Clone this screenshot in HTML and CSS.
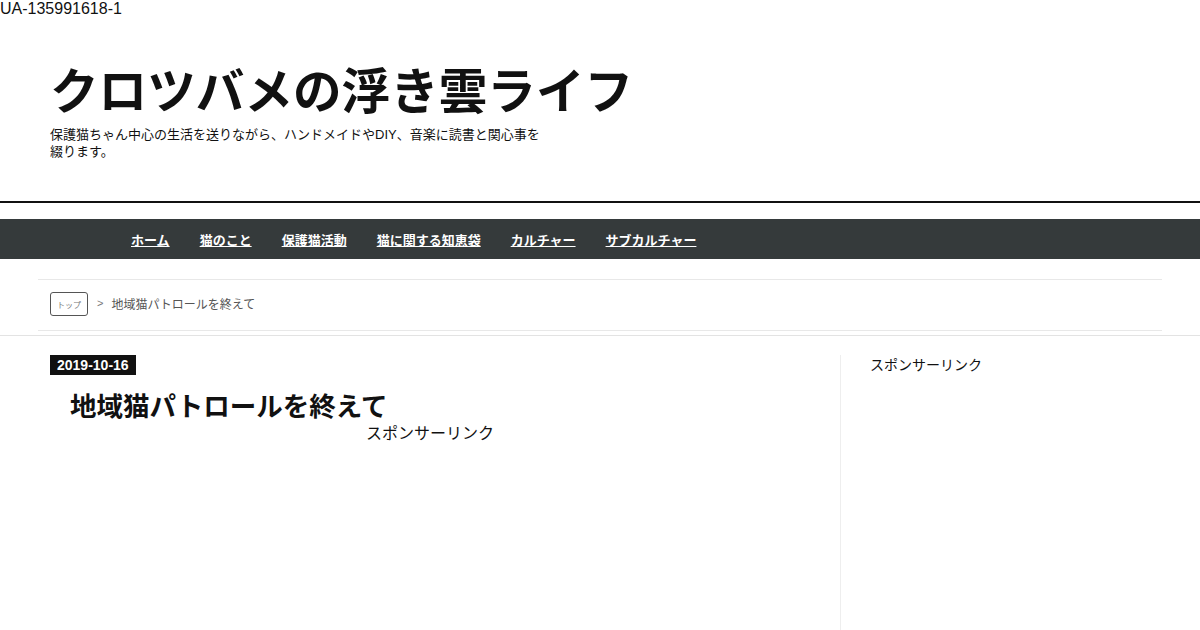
FILE: index.html
```html
<!DOCTYPE html>
<html lang="ja">
<head>
    <meta charset="UTF-8">
    <meta name="viewport" content="width=device-width, initial-scale=1.0">
    <title>地域猫パトロールを終えて - クロツバメの浮き雲ライフ</title>
    <link rel="stylesheet" href="styles.css">
</head>
<body>
    <div class="ua">UA-135991618-1</div>
    <header class="site-header">
        <h1 class="site-title">クロツバメの浮き雲ライフ</h1>
        <p class="site-desc">保護猫ちゃん中心の生活を送りながら、ハンドメイドやDIY、音楽に読書と関心事を綴ります。</p>
    </header>
    <nav class="global-nav">
        <a href="#">ホーム</a>
        <a href="#">猫のこと</a>
        <a href="#">保護猫活動</a>
        <a href="#">猫に関する知恵袋</a>
        <a href="#">カルチャー</a>
        <a href="#">サブカルチャー</a>
    </nav>
    <div class="breadcrumb-wrap">
        <div class="breadcrumb">
            <a href="#" class="crumb-top">トップ</a>
            <span class="crumb-sep">&gt;</span>
            <span class="crumb-current">地域猫パトロールを終えて</span>
        </div>
    </div>
    <div class="container">
        <main class="main">
            <span class="post-date">2019-10-16</span>
            <h2 class="post-title">地域猫パトロールを終えて</h2>
            <p class="sponsor">スポンサーリンク</p>
        </main>
        <aside class="sidebar">
            <p class="sidebar-sponsor">スポンサーリンク</p>
        </aside>
    </div>
</body>
</html>
```

FILE: styles.css
```css
body {
    font-family: "Liberation Sans", "Noto Sans CJK JP", sans-serif;
    margin: 0;
    padding: 0;
    color: #111;
    background-color: #fff;
}
.ua {
    font-size: 16px;
    line-height: 18px;
}
.site-header {
    padding: 44px 50px 41px;
    border-bottom: 2px solid #111;
}
.site-title {
    font-size: 48.6px;
    line-height: 60px;
    margin: 0;
    font-weight: bold;
}
.site-desc {
    width: 500px;
    font-size: 13px;
    line-height: 17px;
    margin: 4px 0 0;
}
.global-nav {
    display: flex;
    gap: 30px;
    margin-top: 16px;
    padding-left: 131px;
    height: 40px;
    align-items: center;
    background-color: #353a3b;
}
.global-nav a {
    color: #fff;
    font-size: 13px;
    font-weight: bold;
    text-decoration: underline;
}
.breadcrumb-wrap {
    margin-top: 20px;
    padding-bottom: 4px;
    border-bottom: 1px solid #e3e3e3;
}
.breadcrumb {
    margin: 0 38px;
    padding: 12px 12px 14px;
    border-top: 1px solid #e8e8e8;
    border-bottom: 1px solid #e8e8e8;
    display: flex;
    align-items: center;
    color: #555;
}
.crumb-top {
    display: inline-flex;
    align-items: center;
    justify-content: center;
    width: 36px;
    height: 22px;
    border: 1px solid #555;
    border-radius: 3px;
    font-size: 8px;
    color: #777;
    text-decoration: none;
}
.crumb-sep {
    font-size: 11px;
    color: #777;
    margin: -3px 8px 0 9px;
}
.crumb-current {
    font-size: 12px;
    margin-top: -2px;
}
.container {
    display: flex;
    margin-top: 19px;
    min-height: 276px;
}
.main {
    width: 760px;
    padding-left: 50px;
    padding-right: 30px;
}
.post-date {
    display: inline-block;
    background-color: #111;
    color: #fff;
    font-weight: bold;
    font-size: 14px;
    line-height: 20px;
    padding: 0 7px;
}
.post-title {
    font-size: 26.5px;
    line-height: 36px;
    margin: 14px 0 0 20px;
    font-weight: bold;
}
.sponsor {
    text-align: center;
    font-size: 16px;
    line-height: 18px;
    margin: 0;
}
.sidebar {
    flex: 1;
    border-left: 1px solid #eee;
    padding-left: 29px;
}
.sidebar-sponsor {
    font-size: 14px;
    line-height: 20px;
    margin: 0;
}
```
